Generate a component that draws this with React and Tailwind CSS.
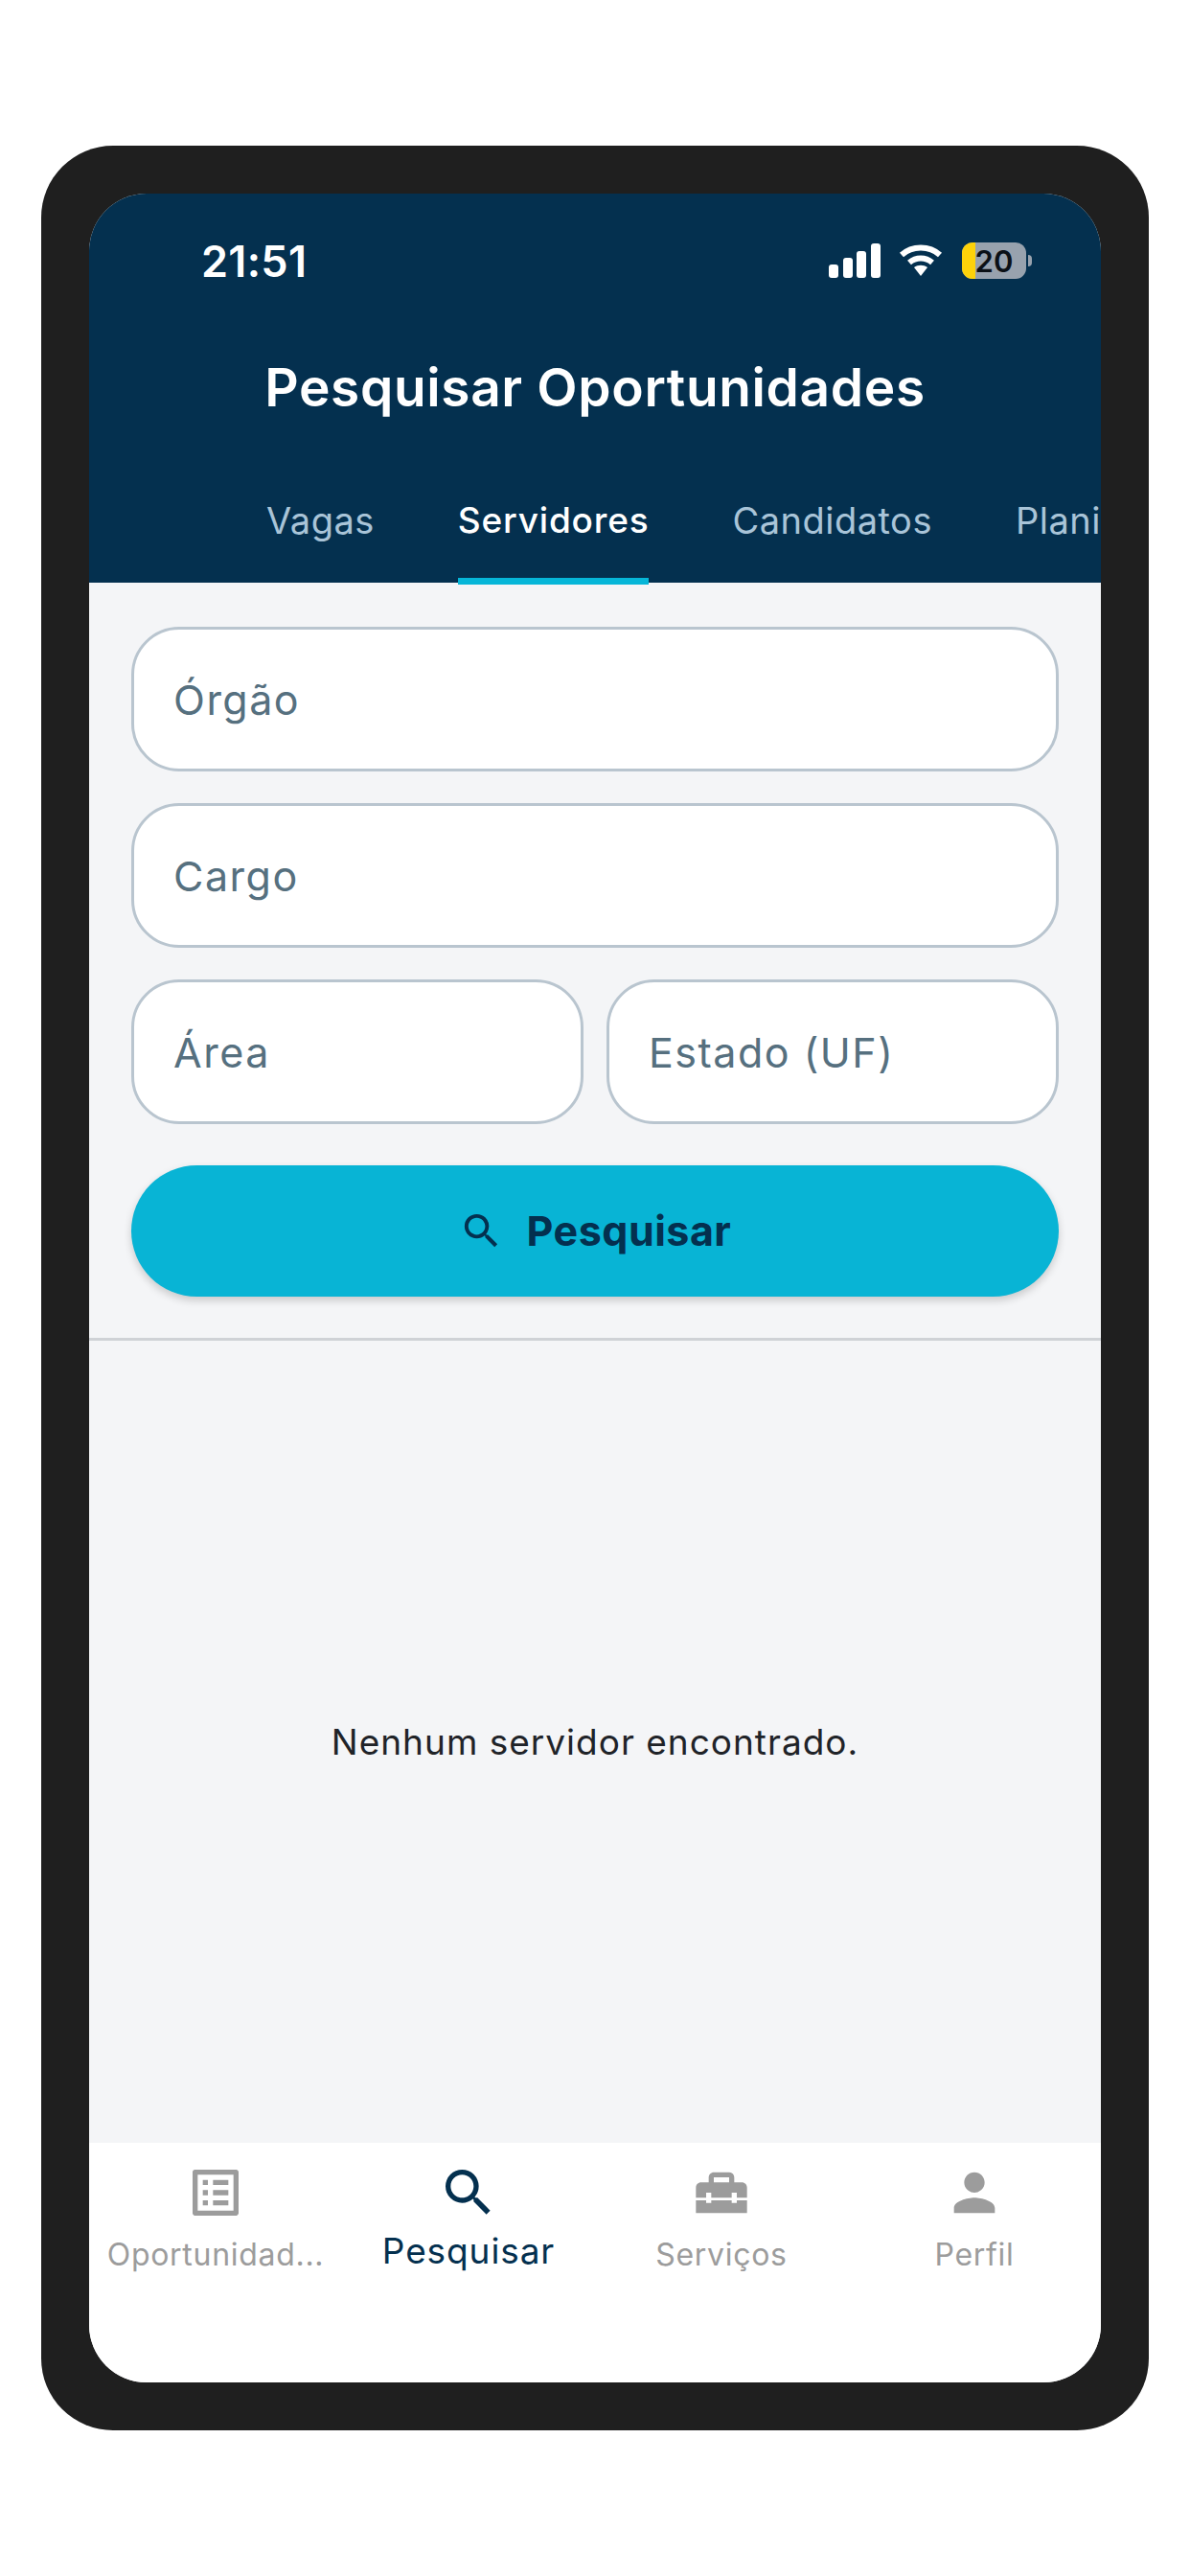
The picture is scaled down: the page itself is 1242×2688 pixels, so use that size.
import { MdListAlt, MdSearch, MdHomeRepairService, MdPerson } from "react-icons/md";

const tabs = ["Vagas", "Servidores", "Candidatos", "Planilhas"];

const navItems = [
  { label: "Oportunidad...", icon: MdListAlt },
  { label: "Pesquisar", icon: MdSearch, active: true },
  { label: "Serviços", icon: MdHomeRepairService },
  { label: "Perfil", icon: MdPerson },
];

const StatusIcons = () => (
  <div className="flex items-center">
    {/* signal bars */}
    <svg width="54" height="36" viewBox="0 0 54 36" fill="#fff">
      <rect x="0" y="22" width="10" height="14" rx="3" />
      <rect x="15" y="15" width="10" height="21" rx="3" />
      <rect x="29" y="8" width="10" height="28" rx="3" />
      <rect x="44" y="0" width="10" height="36" rx="3" />
    </svg>
    {/* wifi */}
    <svg className="ml-[19px]" width="46" height="34" viewBox="0 0 46 34" fill="none" stroke="#fff" strokeWidth="6">
      <path d="M3 11 C14 1 32 1 43 11" />
      <path d="M11 19 C18 13 28 13 35 19" />
      <path d="M16 24 L23 33 L30 24 C26 21 20 21 16 24 Z" fill="#fff" stroke="none" />
    </svg>
    {/* battery */}
    <div className="ml-[20px] flex items-center">
      <div className="relative flex h-[38px] w-[67px] items-center justify-center overflow-hidden rounded-[11px] bg-[#98a2ae]">
        <div className="absolute inset-y-0 left-0 w-[14px] bg-[#fdd20a]" />
        <span className="relative text-[31px] font-semibold leading-none text-[#0b1016]">20</span>
      </div>
      <div className="ml-[2px] h-[12px] w-[4px] rounded-r-full bg-[#98a2ae]" />
    </div>
  </div>
);

const Field = ({ placeholder }) => (
  <input
    placeholder={placeholder}
    readOnly
    className="h-[151px] min-w-0 rounded-[50px] border-[3px] border-[#b9c5cf] bg-white pl-[41px] text-[43px] tracking-[1.5px] text-[#56707f] outline-none placeholder:text-[#56707f]"
  />
);

export default function App() {
  return (
    <div className="min-h-[2688px] bg-white pl-[43px] pt-[152px] font-['Inter',sans-serif]">
      <div className="h-[2384px] w-[1156px] rounded-[75px] bg-[#1f1f1f] p-[50px]">
        <div className="flex h-full flex-col overflow-hidden rounded-[60px] bg-[#f4f5f7]">
          {/* header */}
          <div className="h-[406px] shrink-0 bg-[#04304f] pt-[46px]">
            <div className="flex h-[48px] items-center justify-between pl-[117px] pr-[72px]">
              <span className="text-[45px] font-semibold leading-none tracking-[0.3px] text-white">21:51</span>
              <StatusIcons />
            </div>
            <h1 className="mt-[81px] text-center text-[55px] font-semibold leading-none tracking-[0.65px] text-white">
              Pesquisar Oportunidades
            </h1>
            <div className="mt-[87px] flex gap-[87px] overflow-hidden pl-[185px]">
              {tabs.map((tab) => (
                <div
                  key={tab}
                  className={`shrink-0 border-b-[7px] pb-[36px] leading-[48px] ${
                    tab === "Servidores"
                      ? "border-[#06b6d8] text-[37px] font-medium tracking-[0.8px] text-white"
                      : "border-transparent text-[38px] tracking-[0.5px] text-[#a9c4d8]"
                  }`}
                >
                  {tab}
                </div>
              ))}
            </div>
          </div>

          {/* search form */}
          <div className="flex flex-col gap-[33px] border-b-[3px] border-[#cfd2d6] px-[44px] pb-[43px] pt-[46px]">
            <Field placeholder="Órgão" />
            <Field placeholder="Cargo" />
            <div className="grid grid-cols-2 gap-[24px]">
              <Field placeholder="Área" />
              <Field placeholder="Estado (UF)" />
            </div>
            <button className="mt-[10px] flex h-[137px] items-center justify-center gap-[24px] rounded-full bg-[#08b4d5] text-[43px] font-bold tracking-[0.5px] text-[#04304f] shadow-[0_4px_8px_rgba(0,0,0,0.18)]">
              <MdSearch size={47} />
              Pesquisar
            </button>
          </div>

          {/* empty state */}
          <div className="flex flex-1 items-center justify-center">
            <p className="text-[37px] tracking-[1px] text-[#1f2328]">Nenhum servidor encontrado.</p>
          </div>

          {/* bottom navigation */}
          <div className="grid h-[250px] shrink-0 grid-cols-4 bg-white pt-[20px]">
            {navItems.map(({ label, icon: Icon, active }) => (
              <div key={label} className={`flex flex-col items-center ${active ? "text-[#04304f]" : "text-[#9c9c9c]"}`}>
                <Icon size={64} />
                <span className={active ? "mt-[1px] text-[37px] tracking-[0.9px]" : "mt-[9px] text-[32px] tracking-[0.7px]"}>{label}</span>
              </div>
            ))}
          </div>
        </div>
      </div>
    </div>
  );
}
